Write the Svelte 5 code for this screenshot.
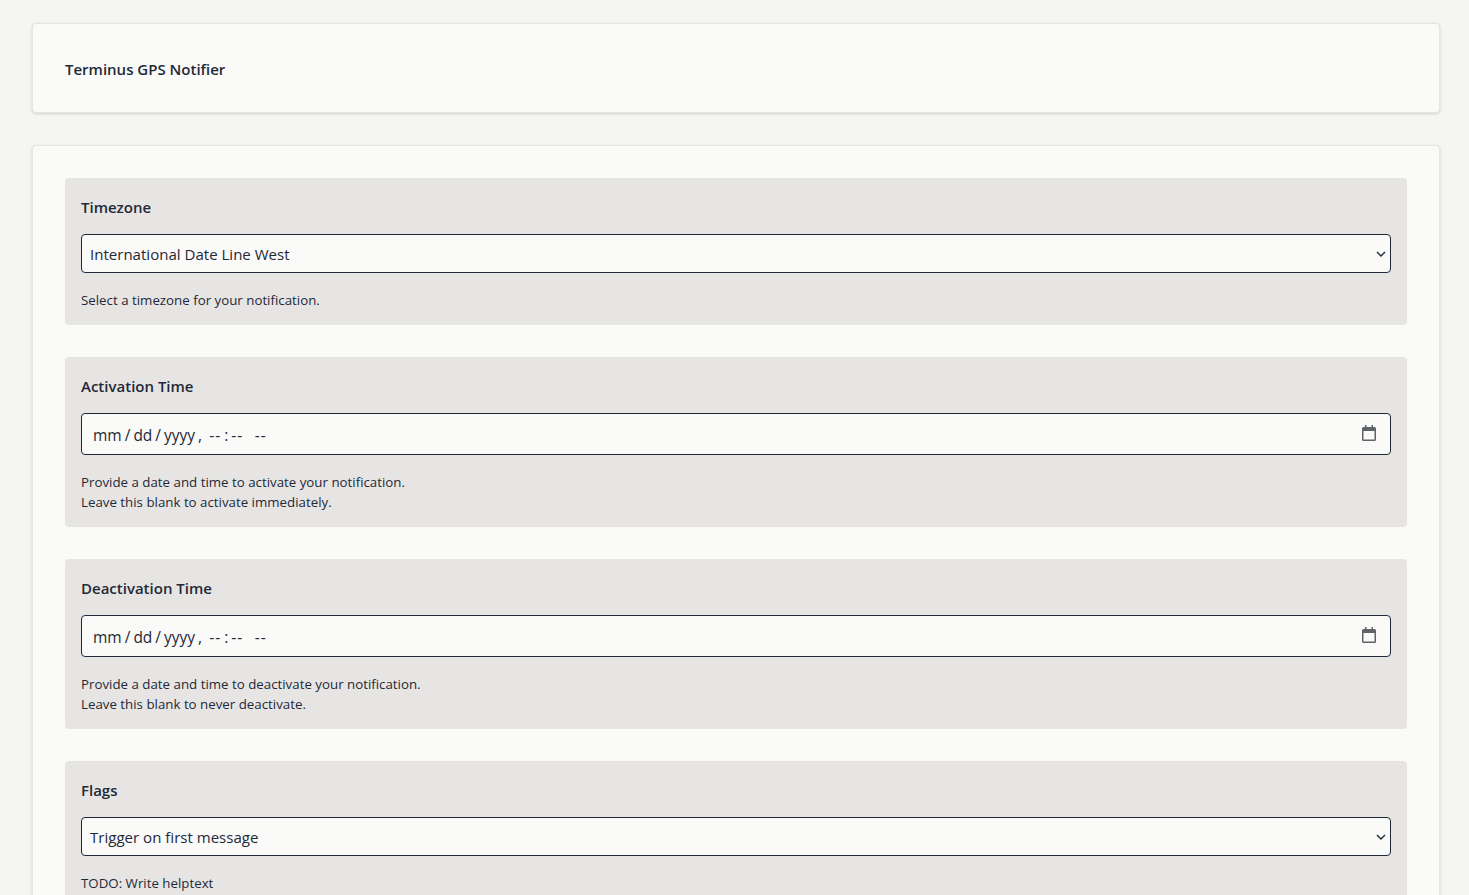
<script>
  const fields = [
    {
      label: "Timezone",
      type: "select",
      options: ["International Date Line West", "Midway Island", "Hawaii"],
      help: ["Select a timezone for your notification."],
    },
    {
      label: "Activation Time",
      type: "datetime",
      help: ["Provide a date and time to activate your notification.", "Leave this blank to activate immediately."],
    },
    {
      label: "Deactivation Time",
      type: "datetime",
      help: ["Provide a date and time to deactivate your notification.", "Leave this blank to never deactivate."],
    },
    {
      label: "Flags",
      type: "select",
      options: ["Trigger on first message", "Trigger on every message"],
      help: ["TODO: Write helptext"],
    },
  ];
</script>

<div class="topbar"></div>
<main class="page">
  <section class="card">
    <h1 class="title">Terminus GPS Notifier</h1>
  </section>

  <form class="card stack">
    {#each fields as field}
      <div class="field">
        <label class="label" for={field.label}>{field.label}</label>
        {#if field.type === "select"}
          <select class="control" id={field.label}>
            {#each field.options as option}
              <option>{option}</option>
            {/each}
          </select>
        {:else}
          <input class="control" id={field.label} type="datetime-local" />
        {/if}
        <p class="help">
          {#each field.help as line, i}
            {#if i > 0}<br />{/if}{line}
          {/each}
        </p>
      </div>
    {/each}
  </form>
</main>

<style>
  :global(body) {
    background: #f5f5f4;
    color: #1f2937;
    font-family: "Open Sans", "Noto Sans", sans-serif;
  }

  .topbar {
    height: 0;
    box-shadow: 0 0 4px rgba(0, 0, 0, 0.25);
  }

  .page {
    display: flex;
    flex-direction: column;
    gap: 32px;
    width: 1408px;
    box-sizing: border-box;
    margin-left: 32px;
    padding: 23px 0 32px;
  }

  .card {
    background: #fafaf9;
    border: 1px solid #e7e5e4;
    border-radius: 4px;
    padding: 32px;
    box-shadow: 0 1px 3px rgba(0, 0, 0, 0.15);
  }

  .stack {
    display: flex;
    flex-direction: column;
    gap: 32px;
  }

  .title {
    margin: 0;
    padding-top: 1px;
    height: 23px;
    font-size: 15px;
    font-weight: 600;
    line-height: 24px;
  }

  .field {
    display: flex;
    flex-direction: column;
    background: #e7e5e4;
    border-radius: 4px;
    padding: 16px;
  }

  .label {
    padding-top: 1px;
    height: 23px;
    font-size: 15px;
    font-weight: 600;
    line-height: 24px;
    margin-bottom: 16px;
  }

  .control {
    box-sizing: border-box;
    width: 100%;
    background-color: #fafaf9;
    color: #1f2937;
    border: 1px solid #1f2937;
    border-radius: 4px;
    font: inherit;
    font-size: 15.05px;
  }

  select.control {
    appearance: none;
    height: 39px;
    padding: 0 8px;
    background-image: url("data:image/svg+xml,%3Csvg xmlns='http://www.w3.org/2000/svg' width='10' height='6' viewBox='0 0 10 6'%3E%3Cpath d='M1 1l4 4 4-4' fill='none' stroke='%231f2937' stroke-width='1.4'/%3E%3C/svg%3E");
    background-repeat: no-repeat;
    background-position: right 4px center;
    background-size: 10px 6px;
  }

  input.control {
    height: 42px;
    padding: 0 12px 0 10px;
    font-size: 15.5px;
  }

  input.control::-webkit-datetime-edit {
    position: relative;
    top: 1px;
  }

  input.control::-webkit-datetime-edit-text {
    padding: 0 2px;
  }

  input.control::-webkit-datetime-edit-hour-field,
  input.control::-webkit-datetime-edit-minute-field,
  input.control::-webkit-datetime-edit-ampm-field {
    letter-spacing: 1px;
  }

  input.control::-webkit-datetime-edit-ampm-field {
    margin-left: 3.5px;
  }

  input.control::-webkit-calendar-picker-indicator {
    position: relative;
    top: -1px;
    width: 18px;
    height: 18px;
    padding: 0;
    margin: 0;
    background-image: url("data:image/svg+xml,%3Csvg xmlns='http://www.w3.org/2000/svg' viewBox='0 0 16 16'%3E%3Cpath d='M4 0h1.5v2h5V0H12v2h1.5A1.5 1.5 0 0 1 15 3.500v11a1.500 1.500 0 0 1-1.500 1.500h-11A1.500 1.500 0 0 1 1 14.500v-11A1.500 1.500 0 0 1 2.500 2H4zM2.500 6v8.500h11V6z' fill='%235f6368'/%3E%3C/svg%3E");
    background-size: 16px 16px;
    background-position: center;
    background-repeat: no-repeat;
  }

  .help {
    margin: 16px 0 -1px;
    padding-top: 1px;
    font-size: 13.3px;
    line-height: 20px;
  }
</style>
